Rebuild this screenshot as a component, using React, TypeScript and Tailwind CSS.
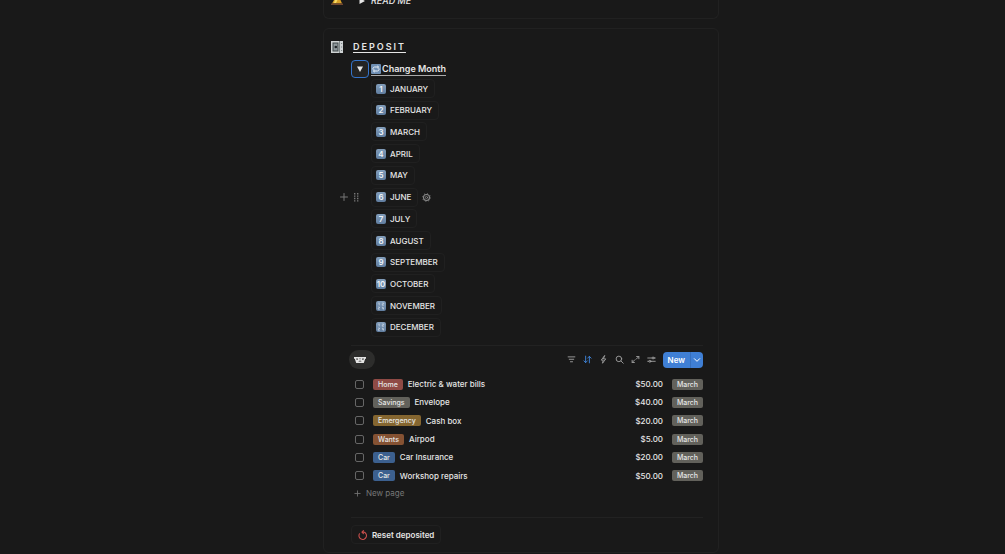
import type { ReactNode } from 'react';

const months = [
  { id: 1, icon: "1", title: "JANUARY" },
  { id: 2, icon: "2", title: "FEBRUARY" },
  { id: 3, icon: "3", title: "MARCH" },
  { id: 4, icon: "4", title: "APRIL" },
  { id: 5, icon: "5", title: "MAY" },
  { id: 6, icon: "6", title: "JUNE" },
  { id: 7, icon: "7", title: "JULY" },
  { id: 8, icon: "8", title: "AUGUST" },
  { id: 9, icon: "9", title: "SEPTEMBER" },
  { id: 10, icon: "10", title: "OCTOBER" },
  { id: 11, icon: "", title: "NOVEMBER" },
  { id: 12, icon: "", title: "DECEMBER" },
]

const deposits = [
  { id: 1, tag: "Home", color: "bg-[#8f4a45]", title: "Electric & water bills", amount: "$50.00" },
  { id: 2, tag: "Savings", color: "bg-[#62615b]", title: "Envelope", amount: "$40.00" },
  { id: 3, tag: "Emergency", color: "bg-[#856630]", title: "Cash box", amount: "$20.00" },
  { id: 4, tag: "Wants", color: "bg-[#855233]", title: "Airpod", amount: "$5.00" },
  { id: 5, tag: "Car", color: "bg-[#3c608f]", title: "Car Insurance", amount: "$20.00" },
  { id: 6, tag: "Car", color: "bg-[#3c608f]", title: "Workshop repairs", amount: "$50.00" },
]

const tools = [
  {
    label: "Filter",
    color: "text-[#a3a3a3]",
    icon: <path d="M1.500 2.500h9M3 5.700h6M4.600 9h2.800" />,
  },
  {
    label: "Sort",
    color: "text-[#3f86dc]",
    icon: <path d="M3.500 1.500v8.500M1.200 7.800l2.300 2.400 2.300-2.400M8.500 10.500V2M6.200 4.200l2.300-2.400 2.300 2.400" />,
  },
  {
    label: "Automations",
    color: "text-[#a3a3a3]",
    icon: <path d="M7.300 1 3 6.800h2.600L4.700 11 9 5.200H6.400z" />,
  },
  {
    label: "Search",
    color: "text-[#a3a3a3]",
    icon: <><circle cx="5.200" cy="5.200" r="3.700" /><path d="m8 8 3 3" /></>,
  },
  {
    label: "Open full page",
    color: "text-[#a3a3a3]",
    icon: <path d="M7.500 2h3v3M10.300 2.200 7 5.500M4.500 10h-3V7M1.700 9.800 5 6.500" />,
  },
  {
    label: "Settings",
    color: "text-[#a3a3a3]",
    icon: <><path d="M1 4h5.600M9.600 4H11M1 8.400h1.400M5.400 8.400H11" /><circle cx="8.100" cy="4" r="1.300" /><circle cx="3.900" cy="8.400" r="1.300" /></>,
  },
]

function Icon({ size = "size-3", stroke = "1", children }: { size?: string, stroke?: string, children: ReactNode }) {
  return (
    <svg viewBox="0 0 12 12" fill="none" stroke="currentColor" strokeWidth={stroke} strokeLinecap="round" strokeLinejoin="round" className={`${size} shrink-0`} aria-hidden="true">
      {children}
    </svg>
  )
}

function Keycap({ value }: { value: string }) {
  return (
    <span className="flex size-[10px] shrink-0 items-center justify-center rounded-xs bg-linear-to-b from-[#829dba] to-[#607d9f] text-[8px] leading-none font-semibold text-[#f0f4f8]">
      {value || (
        <svg viewBox="0 0 10 10" fill="none" stroke="#c6d3e1" strokeWidth="0.8" className="size-[10px]" aria-hidden="true">
          <path d="M2.400 2.200 3.200 1.800v2.600M6.200 2h1.400v1H6.300v1.300h1.500M2.200 6h1.300v1H2.300v1.300h1.400M6.400 5.800v1.500h1.500M7.300 6.400v2.200" />
        </svg>
      )}
    </span>
  )
}

function Months() {
  return (
    <ul className="mt-px flex h-[258px] flex-col items-start justify-between">
      {months.map((item) =>
        <li key={item.id} className="flex items-center">
          {item.title === "JUNE" && (
            <span className="-ml-[33px] flex w-[33px] items-center gap-0.5 text-[#777]">
              <button type="button" aria-label="Add block" className="flex"><Icon><path d="M6 2.500v7M2.500 6h7" /></Icon></button>
              <button type="button" aria-label="Drag block" className="flex">
                <svg viewBox="0 0 8 10" fill="currentColor" className="h-[10px] w-2" aria-hidden="true">
                  <path d="M2 1h1.400v1.400H2zM5 1h1.400v1.400H5zM2 3.400h1.400v1.400H2zM5 3.400h1.400v1.400H5zM2 5.800h1.400v1.400H2zM5 5.800h1.400v1.400H5zM2 8.200h1.400v1.400H2zM5 8.200h1.400v1.400H5z" />
                </svg>
              </button>
            </span>
          )}
          <button type="button" className="flex h-[19px] items-center gap-1 rounded-sm border border-[#202020] pr-1.5 pl-1 text-[8px] font-medium text-[#e6e6e6]">
            <Keycap value={item.icon} />
            {item.title}
          </button>
          {item.title === "JUNE" && (
            <button type="button" aria-label="Button settings" className="ml-1 flex text-[#8a8a8a]">
              <Icon size="size-[9px]">
                <circle cx="6" cy="6" r="4" strokeWidth="1.400" />
                <circle cx="6" cy="6" r="5.300" strokeWidth="1" strokeDasharray="1.500 2.660" strokeLinecap="butt" />
                <circle cx="6" cy="6" r="1.500" />
              </Icon>
            </button>
          )}
        </li>
      )}
    </ul>
  )
}

function Toolbar() {
  return (
    <div className="flex items-center justify-between border-t border-[#222] pt-1">
      <button type="button" aria-label="Deposit view" className="-ml-0.5 flex h-[19px] w-[26px] items-center justify-center rounded-full bg-[#2d2d2c] pr-1">
        <svg viewBox="0 0 12 8" className="h-2 w-3" aria-hidden="true">
          <path fill="#e4e4e4" d="M0 1h12v1.800h-.8L9.800 7H2.200L.8 2.800H0z" />
          <path fill="#2d2d2c" d="M2.200 2.400h1.600v1.300H2.500zM8.200 2.400h1.600l-.3 1.300H8.200zM5.200 2.400h1.600L6 3.600zM4.200 5.600 6 4.500l1.800 1.100z" />
        </svg>
      </button>
      <div className="flex items-center gap-1">
        {tools.map((item) =>
          <button key={item.label} type="button" aria-label={item.label} className={`flex w-3 justify-center ${item.color}`}>
            <Icon size="size-[9px]" stroke="1.200">{item.icon}</Icon>
          </button>
        )}
        <div className="ml-px flex h-4 items-center rounded-sm bg-[#3f7fd5] text-[8px] font-semibold text-white">
          <button type="button" className="h-full px-[5px]">New</button>
          <button type="button" aria-label="New options" className="flex h-full w-[13px] items-center justify-center border-l border-[#366fbd]">
            <Icon size="size-2" stroke="1.500"><path d="m2 4 4 4 4-4" /></Icon>
          </button>
        </div>
      </div>
    </div>
  )
}

function Deposits() {
  return (
    <table className="mt-1.5 h-[110px] w-full text-[8px] leading-3 font-medium text-[#e6e6e6]">
      <tbody>
        {deposits.map((item) =>
          <tr key={item.id}>
            <td className="w-[22px] p-0 pl-1 align-middle">
              <input id={`deposit-${item.id}`} type="checkbox" className="block size-[9px] appearance-none rounded-xs border border-[#666] checked:bg-[#3f7fd5]" />
            </td>
            <td className="p-0 align-middle">
              <label htmlFor={`deposit-${item.id}`} className="flex items-center gap-[5px]">
                <span className={`h-[11px] rounded-xs px-[5px] text-[7px] leading-[11px] ${item.color}`}>{item.tag}</span>
                {item.title}
              </label>
            </td>
            <td className="p-0 text-right align-middle">{item.amount}</td>
            <td className="w-10 p-0 align-middle">
              <span className="ml-auto block h-[11px] w-[31px] rounded-xs bg-[#62615b] text-center text-[7px] leading-[11px]">March</span>
            </td>
          </tr>
        )}
      </tbody>
    </table>
  )
}

export default function App() {
  return (
    <main className="flex min-h-screen justify-center bg-[#191919] pl-[37px] font-['Inter',sans-serif] text-[#e6e6e6]">
      <div className="w-full max-w-[396px]">
        <section className="flex h-[19px] items-start gap-2 overflow-hidden rounded-b-md border border-t-0 border-[#212121] pl-[7px]">
          <svg viewBox="0 0 12 6" className="h-1.5 w-3" aria-hidden="true">
            <path fill="#d9a127" d="M3 0h6.500l1.500 3.500H1z" />
            <path fill="#f7dc65" d="M4 0h2.500L5 3H3z" />
            <path fill="#70462f" d="M0 3.500h12V5H0z" />
          </svg>
          <button type="button" className="-mt-[5px] flex items-center gap-1.5 pl-2 text-[9px] leading-3 font-medium italic">
            <svg viewBox="0 0 6 6" className="size-1.5" fill="currentColor" aria-hidden="true"><path d="M.5 0 6 3 .5 6z" /></svg>
            READ ME
          </button>
        </section>

        <section className="mt-[9px] rounded-md border border-[#212121] pt-3 pr-[15px] pb-2 pl-[7px]">
          <div className="flex items-center gap-[10px]">
            <svg viewBox="0 0 12 12" className="size-3" aria-hidden="true">
              <path fill="#cfd3d4" d="M0 0h12v12H0z" />
              <path fill="#40484b" d="M1.500 1.500h6v9h-6z" />
              <path fill="#8f989c" d="M2.500 2.500h4v7h-4z" />
              <circle cx="4.800" cy="6" r="1.300" fill="#202426" />
              <path stroke="#6a7275" strokeWidth=".8" d="M8.500 0v12M10 2.500h1.200M10 6h1.200M10 9.500h1.200" />
            </svg>
            <h2 className="text-[9px] leading-3 font-semibold tracking-[2px] underline underline-offset-2">DEPOSIT</h2>
          </div>

          <div className="pl-5">
            <div className="mt-[7px] flex items-center gap-0.5">
              <button type="button" aria-label="Toggle months" className="flex size-[18px] items-center justify-center rounded-sm border border-[#3473ca] bg-[#232323]">
                <svg viewBox="0 0 6 6" className="size-1.5" fill="currentColor" aria-hidden="true"><path d="M0 .5h6L3 6z" /></svg>
              </button>
              <h3 className="flex items-center gap-px border-b border-[#aaa] text-[9px] leading-3 font-semibold">
                <svg viewBox="0 0 10 10" className="size-[10px]" aria-hidden="true">
                  <rect width="10" height="10" rx="1" fill="#6f8fb3" />
                  <path fill="none" stroke="#e8eef5" d="M7.500 3H3.500a1.700 1.700 0 0 0-1.200 2.800M2.500 7h4a1.700 1.700 0 0 0 1.200-2.800M6.300 1.900 7.600 3 6.300 4.100M3.700 5.900 2.400 7l1.300 1.100" />
                </svg>
                Change Month
              </h3>
            </div>
            <div className="pl-5">
              <Months />
            </div>
            <div className="mt-2">
              <Toolbar />
              <Deposits />
              <button type="button" className="mt-0.5 flex items-center gap-[5px] pl-[3px] text-[8px] leading-3 text-[#777]">
                <Icon size="size-[7px]" stroke="1.400"><path d="M6 1.500v9M1.500 6h9" /></Icon>
                New page
              </button>
            </div>
            <div className="mt-[18px] border-t border-[#222] pt-[7px]">
              <button type="button" className="flex h-[19px] items-center gap-1 rounded-sm border border-[#202020] px-1.5 text-[8px] font-semibold">
                <svg viewBox="0 0 12 12" fill="none" stroke="#c74f4c" strokeWidth="1.300" strokeLinecap="round" strokeLinejoin="round" className="size-[10px]" aria-hidden="true">
                  <path d="M1.800 4.500A4.500 4.500 0 1 0 7 2.500H5M6.500.8 4.700 2.500l1.800 1.800" />
                </svg>
                Reset deposited
              </button>
            </div>
          </div>
        </section>
      </div>
    </main>
  )
}
